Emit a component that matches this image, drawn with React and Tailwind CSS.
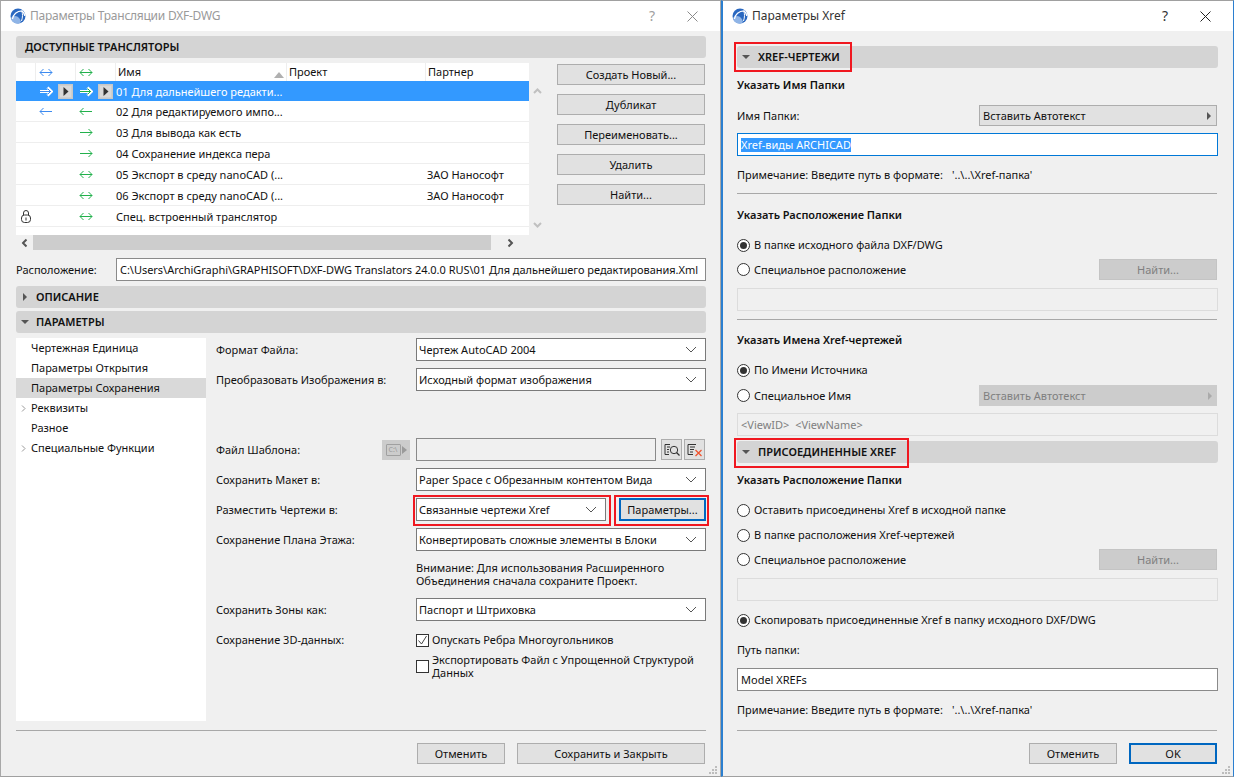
import React from "react";

const Logo = () => (
  <svg width="16" height="16" viewBox="0 0 16 16" className="shrink-0">
    <circle cx="8" cy="8" r="7.500" fill="#2a68c0" />
    <path d="M1 10c0 3 3 5.500 6 5.500 1.500 0 3-.5 4-1.500-.5-3-3-6-6-6-2 0-3.500 1-4 2z" fill="#8fb4e6" />
    <path d="M2.500 11C3 6.500 7 2.800 12 2.800c1.600 1.400 2.600 3 2.800 5.200" fill="none" stroke="#fff" strokeWidth="1.200" />
    <path d="M11.800 3c1 3 1 6-.3 10" fill="none" stroke="#fff" strokeWidth="1" />
  </svg>
);

const Arrow = ({ dir, color }) => (
  <svg width="14" height="9" viewBox="0 0 14 9" className="shrink-0">
    <path
      d={dir === "both" ? "M1 4.500h12M4.500 1 1 4.500 4.500 8M9.500 1 13 4.500 9.500 8" : dir === "left" ? "M1 4.500h12M4.500 1 1 4.500 4.500 8" : "M1 4.500h12M9.500 1 13 4.500 9.500 8"}
      fill="none"
      stroke={color}
      strokeWidth="1"
    />
  </svg>
);

const HollowArrow = ({ color }) => (
  <svg width="14" height="11" viewBox="0 0 14 11" className="shrink-0">
    <path d="M1 5.500h11.500M8.500 1.500l4 4-4 4" fill="none" stroke="#fff" strokeWidth="2.800" />
    <path d="M1 5.500h11M8.500 2.500l3 3-3 3" fill="none" stroke={color} strokeWidth="1" />
  </svg>
);

const Play = () => (
  <span className="flex h-[15px] w-[15px] shrink-0 items-center justify-center border border-[#c8c8c8] bg-[#d9d9d9] outline outline-1 -outline-offset-2 outline-[#cfcfcf]">
    <svg width="6" height="9" viewBox="0 0 6 9"><path d="M.5 0l5 4.500-5 4.500z" fill="#333" /></svg>
  </span>
);

const Caret = ({ open, light }) => (
  <svg width="8" height="8" viewBox="0 0 8 8" className="shrink-0">
    {open ? <path d="M0 2h8L4 6z" fill="#555" /> : <path d="M2 0l4 4-4 4z" fill={light ? "#aaa" : "#555"} />}
  </svg>
);

const Chevron = ({ className }) => (
  <svg width="12" height="7" viewBox="0 0 12 7" className={className}>
    <path d="M1 1l5 5 5-5" fill="none" stroke="#555" strokeWidth="1" />
  </svg>
);

const ThickChevron = ({ color, className }) => (
  <svg width="9" height="6" viewBox="0 0 9 6" className={className}>
    <path d="M1 1l3.500 3.500L8 1" fill="none" stroke={color} strokeWidth="2" />
  </svg>
);

const Close = ({ color }) => (
  <svg width="11" height="11" viewBox="0 0 11 11"><path d="M.5.500l10 10M10.500.500l-10 10" stroke={color} strokeWidth="1" /></svg>
);

const Header = ({ open = true, flush, wide, children, className = "" }) => (
  <div className={`flex h-[22px] items-center rounded-[3px] bg-[#d4d4d4] ${className}`}>
    {flush ? null : <span className={`ml-[6px] flex w-[6px] justify-center ${wide ? "mr-[9px]" : "mr-[8px]"}`}><Caret open={open} /></span>}
    <span className="whitespace-nowrap font-semibold text-[#111]">{children}</span>
  </div>
);

const Btn = ({ children, className = "", disabled, primary }) => (
  <div className={`flex h-[21px] items-center justify-center whitespace-nowrap border ${primary ? "border-2 border-[#0067c0]" : disabled ? "border-[#c4c4c4]" : "border-[#adadad]"} ${disabled ? "bg-[#cccccc] text-[#7f7f7f]" : "bg-[#e1e1e1] text-[#111]"} ${className}`}>
    {children}
  </div>
);

const Select = ({ children, className = "" }) => (
  <div className={`flex h-[23px] items-center justify-between border border-[#7a7a7a] bg-white pl-[2px] pr-[8px] text-[#111] ${className}`}>
    <span className="whitespace-nowrap">{children}</span>
    <Chevron />
  </div>
);

const Input = ({ children, className = "" }) => (
  <div className={`flex h-[23px] items-center whitespace-nowrap border border-[#8a8a8a] bg-white px-[3px] text-[#111] ${className}`}>{children}</div>
);

const Radio = ({ checked, children, className = "" }) => (
  <div className={`flex items-center gap-[4px] ${className}`}>
    <span className="flex h-[13px] w-[13px] shrink-0 items-center justify-center rounded-full border border-[#333] bg-white">
      {checked && <span className="h-[7px] w-[7px] rounded-full bg-[#333]" />}
    </span>
    <span className="whitespace-nowrap text-[#111]">{children}</span>
  </div>
);

const Check = ({ checked, children, className = "" }) => (
  <div className={`flex items-center gap-[3px] ${className}`}>
    <span className="flex h-[13px] w-[13px] shrink-0 items-center justify-center border border-[#333] bg-white">
      {checked && <svg width="11" height="11" viewBox="0 0 11 11"><path d="M1.500 5.500l3 3.500 5-8" fill="none" stroke="#444" strokeWidth="1" /></svg>}
    </span>
    <span className="text-[#111]">{children}</span>
  </div>
);

const Bold = ({ children, className = "" }) => <div className={`h-[16px] whitespace-nowrap font-semibold leading-[16px] text-[#111] ${className}`}>{children}</div>;

const Grip = () => (
  <svg width="10" height="10" viewBox="0 0 10 10" className="absolute bottom-[1px] right-[2px]">
    <g fill="#bdbdbd"><rect x="7" y="1" width="2" height="2" /><rect x="4" y="4" width="2" height="2" /><rect x="7" y="4" width="2" height="2" /><rect x="1" y="7" width="2" height="2" /><rect x="4" y="7" width="2" height="2" /><rect x="7" y="7" width="2" height="2" /></g>
  </svg>
);

const rows = [
  { n: "01 Для дальнейшего редакти...", sel: true },
  { n: "02 Для редактируемого импо...", a: "left", b: "left" },
  { n: "03 Для вывода как есть", b: "right" },
  { n: "04 Сохранение индекса пера", b: "right" },
  { n: "05 Экспорт в среду nanoCAD (...", b: "both", p: "ЗАО Нанософт" },
  { n: "06 Экспорт в среду nanoCAD (...", b: "both", p: "ЗАО Нанософт" },
  { n: "Спец. встроенный транслятор", b: "both", lock: true },
];

const BLUE = "#3d8bf0";
const GREEN = "#22b14c";

const Row = ({ r }) => (
  <div className={`flex items-center ${r.sel ? "h-[20px] bg-[#3399ff] text-white" : "h-[21px] border-b border-[#eeeeee] text-[#111]"}`}>
    <span className="flex w-[20px] justify-center pt-[1px]">
      {r.lock && (
        <svg width="10" height="13" viewBox="0 0 10 13"><rect x=".5" y="5" width="9" height="7.500" rx="3" fill="#fff" stroke="#333" /><path d="M2.500 5V3a2.500 2.500 0 0 1 5 0v2" fill="none" stroke="#333" /><rect x="4.500" y="7.500" width="1" height="3" fill="#333" /></svg>
      )}
    </span>
    <span className="flex w-[40px] items-center pl-[3px]">
      {r.sel ? <><HollowArrow color={BLUE} /><span className="ml-[5px]"><Play /></span></> : r.a && <Arrow dir={r.a} color={BLUE} />}
    </span>
    <span className="flex w-[40px] items-center pl-[3px]">
      {r.sel ? <><HollowArrow color={GREEN} /><span className="ml-[5px]"><Play /></span></> : r.b && <Arrow dir={r.b} color={GREEN} />}
    </span>
    <span className="w-[311px] whitespace-nowrap pt-[1px]">{r.n}</span>
    <span className="whitespace-nowrap pt-[1px]">{r.p}</span>
  </div>
);

const FormRow = ({ label, children, className = "" }) => (
  <div className={`flex items-center ${className}`}>
    <span className="w-[200px] whitespace-nowrap text-[#111]">{label}</span>
    <div className="flex-1">{children}</div>
  </div>
);

function LeftWindow() {
  return (
    <div className="relative flex h-[777px] w-[721px] shrink-0 flex-col border-x border-t border-b border-x-[#a8a8a8] border-t-[#a0a0a0] border-b-[#a0a0a0] bg-[#f0f0f0]">
      <div className="flex h-[30px] shrink-0 items-center bg-white pl-[9px] pr-[22px]">
        <Logo />
        <span className="ml-[4px] whitespace-nowrap text-[12px] tracking-[-0.25px] text-[#9a9a9a]">Параметры Трансляции DXF-DWG</span>
        <span className="ml-auto mr-[32px] text-[14px] text-[#a0a0a0]">?</span>
        <Close color="#8a8a8a" />
      </div>
      <div className="flex flex-1 flex-col pl-[15px] pr-[14px] pt-[5px]">
        <Header flush className="pl-[9px]">ДОСТУПНЫЕ ТРАНСЛЯТОРЫ</Header>
        <div className="mt-[5px] flex">
          <div className="w-[513px] shrink-0">
            <div className="h-[172px] bg-white">
              <div className="flex h-[18px] items-center text-[#111]">
                <span className="h-full w-[20px] border-r border-[#eeeeee]" />
                <span className="flex h-full w-[40px] items-center border-r border-[#eeeeee] pl-[3px]"><Arrow dir="both" color={BLUE} /></span>
                <span className="flex h-full w-[40px] items-center border-r border-[#eeeeee] pl-[3px]"><Arrow dir="both" color={GREEN} /></span>
                <span className="relative flex h-full w-[171px] items-center border-r border-[#eeeeee] pl-[2px]">
                  Имя
                  <svg width="10" height="6" viewBox="0 0 10 6" className="absolute right-[2px] top-[9px]"><path d="M0 6l5-6 5 6z" fill="#b0b0b0" /></svg>
                </span>
                <span className="flex h-full w-[139px] items-center border-r border-[#eeeeee] pl-[2px]">Проект</span>
                <span className="pl-[2px]">Партнер</span>
              </div>
              {rows.map((r) => <Row key={r.n} r={r} />)}
            </div>
            <div className="flex h-[15px] items-center justify-between bg-[#f0f0f0]">
              <span className="flex w-[17px] justify-center"><ThickChevron color="#555" className="rotate-90" /></span>
              <span className="h-full w-[458px] bg-[#cdcdcd]" />
              <span className="flex w-[38px] justify-center"><ThickChevron color="#555" className="-rotate-90" /></span>
            </div>
          </div>
          <div className="flex h-[172px] w-[28px] shrink-0 flex-col items-center justify-between pb-[7px] pr-[12px] pt-[25px]">
            <ThickChevron color="#c0c0c0" className="rotate-180" />
            <ThickChevron color="#c0c0c0" />
          </div>
          <div className="flex w-[148px] flex-col gap-[9px] pt-[1px]">
            <Btn>Создать Новый...</Btn>
            <Btn>Дубликат</Btn>
            <Btn>Переименовать...</Btn>
            <Btn>Удалить</Btn>
            <Btn>Найти...</Btn>
          </div>
        </div>
        <div className="mt-[8px] flex items-center">
          <span className="w-[100px] whitespace-nowrap text-[#111]">Расположение:</span>
          <Input className="flex-1 overflow-hidden tracking-[-0.03px]">C:\Users\ArchiGraphi\GRAPHISOFT\DXF-DWG Translators 24.0.0 RUS\01 Для дальнейшего редактирования.Xml</Input>
        </div>
        <Header open={false} className="mt-[5px]">ОПИСАНИЕ</Header>
        <Header className="mt-[3px]">ПАРАМЕТРЫ</Header>
        <div className="mt-[5px] flex h-[383px]">
          <div className="w-[190px] shrink-0 bg-white text-[#111]">
            {[["Чертежная Единица"], ["Параметры Открытия"], ["Параметры Сохранения", 0, 1], ["Реквизиты", 1], ["Разное"], ["Специальные Функции", 1]].map(([t, c, s]) => (
              <div key={t} className={`flex h-[20px] items-center whitespace-nowrap ${s ? "bg-[#d9d9d9]" : ""}`}>
                <span className="flex w-[15px] justify-center">{c ? <svg width="5" height="7" viewBox="0 0 5 7"><path d="M1 .5l3 3-3 3" fill="none" stroke="#999" /></svg> : null}</span>
                {t}
              </div>
            ))}
          </div>
          <div className="ml-[10px] flex flex-1 flex-col">
            <FormRow label="Формат Файла:"><Select>Чертеж AutoCAD 2004</Select></FormRow>
            <FormRow label="Преобразовать Изображения в:" className="mt-[7px]"><Select>Исходный формат изображения</Select></FormRow>
            <div className="mt-[47px] flex items-center">
              <span className="w-[166px] whitespace-nowrap text-[#111]">Файл Шаблона:</span>
              <span className="flex h-[20px] w-[28px] items-center justify-center gap-[1px] bg-[#cccccc]">
                <span className="flex h-[12px] w-[15px] items-center justify-center rounded-[1px] border border-[#a0a0a0] text-[7px] leading-[7px] text-[#9a9a9a]">C:\</span>
                <svg width="5" height="8" viewBox="0 0 5 8"><path d="M0 0l5 4-5 4z" fill="#9a9a9a" /></svg>
              </span>
              <span className="ml-[6px] h-[23px] w-[240px] border border-[#8a8a8a] bg-[#f0f0f0]" />
              <span className="ml-[5px] flex h-[21px] w-[21px] items-center justify-center border border-[#adadad] bg-[#e1e1e1]">
                <svg width="16" height="14" viewBox="0 0 16 14"><path d="M6 1.500H1v10h4M3 4h3M3 6.500h2M3 9h2" fill="none" stroke="#333" /><circle cx="10" cy="7" r="3.700" fill="none" stroke="#333" /><path d="M12.500 9.500l3 3" stroke="#333" strokeWidth="1.300" /></svg>
              </span>
              <span className="ml-[2px] flex h-[21px] w-[21px] items-center justify-center border border-[#adadad] bg-[#e1e1e1]">
                <svg width="16" height="14" viewBox="0 0 16 14"><path d="M9 1.500H1v10h5M3 4h5M3 6.500h4M3 9h3" fill="none" stroke="#333" /><path d="M8.500 7l6 6M14.500 7l-6 6" stroke="#f0502a" strokeWidth="1.200" /></svg>
              </span>
            </div>
            <FormRow label="Сохранить Макет в:" className="mt-[7px]"><Select>Paper Space с Обрезанным контентом Вида</Select></FormRow>
            <div className="mt-[7px] flex items-center">
              <span className="w-[200px] whitespace-nowrap text-[#111]">Разместить Чертежи в:</span>
              <Select className="w-[190px]">Связанные чертежи Xref</Select>
              <Btn primary className="ml-[13px] h-[23px] w-[87px]">Параметры...</Btn>
            </div>
            <FormRow label="Сохранение Плана Этажа:" className="mt-[7px]"><Select>Конвертировать сложные элементы в Блоки</Select></FormRow>
            <div className="ml-[200px] mt-[10px] leading-[13px] text-[#111]">
              Внимание: Для использования Расширенного<br />Объединения сначала сохраните Проект.
            </div>
            <FormRow label="Сохранить Зоны как:" className="mt-[11px]"><Select>Паспорт и Штриховка</Select></FormRow>
            <div className="mt-[12px] flex items-center">
              <span className="w-[200px] whitespace-nowrap text-[#111]">Сохранение 3D-данных:</span>
              <Check checked>Опускать Ребра Многоугольников</Check>
            </div>
            <Check className="ml-[200px] mt-[6px] leading-[13px]">Экспортировать Файл с Упрощенной Структурой<br />Данных</Check>
          </div>
        </div>
        <div className="mt-[9px] h-px bg-[#a8a8a8]" />
        <div className="mr-[1px] mt-[12px] flex justify-end gap-[12px]">
          <Btn className="w-[88px]">Отменить</Btn>
          <Btn className="w-[188px]">Сохранить и Закрыть</Btn>
        </div>
      </div>
      <Grip />
      <div className="pointer-events-none absolute left-[412px] top-[494px] h-[31px] w-[198px] border-[2px] border-[#f01820]" />
      <div className="pointer-events-none absolute left-[613px] top-[494px] h-[31px] w-[95px] border-[2px] border-[#f01820]" />
    </div>
  );
}

const Divider = ({ className = "" }) => <div className={`h-px bg-[#a8a8a8] ${className}`} />;

const Note = ({ className = "" }) => (
  <div className={`flex h-[16px] whitespace-nowrap leading-[16px] text-[#111] ${className}`}>
    <span className="w-[215px]">Примечание: Введите путь в формате:</span>
    <span>'..\..\Xref-папка'</span>
  </div>
);

function RightWindow() {
  return (
    <div className="relative flex h-[777px] flex-1 flex-col border-y border-l-2 border-r border-y-[#a0a0a0] border-l-[#2b7fd0] border-r-[#2b7fd0] bg-[#f0f0f0]">
      <div className="flex h-[30px] shrink-0 items-center bg-white pl-[9px] pr-[22px]">
        <Logo />
        <span className="ml-[4px] whitespace-nowrap text-[12px] text-[#333]">Параметры Xref</span>
        <span className="ml-auto mr-[32px] text-[14px] text-[#333]">?</span>
        <Close color="#222" />
      </div>
      <div className="flex flex-1 flex-col pl-[14px] pr-[15px] pt-[15px]">
        <Header wide>XREF-ЧЕРТЕЖИ</Header>
        <Bold className="mt-[9px]">Указать Имя Папки</Bold>
        <div className="mt-[12px] flex items-center justify-between">
          <span className="text-[#111]">Имя Папки:</span>
          <div className="mr-[1px] flex h-[21px] w-[238px] items-center justify-between border border-[#adadad] bg-[#e1e1e1] pl-[3px] pr-[3px] text-[#111]"><span>Вставить Автотекст</span><Caret /></div>
        </div>
        <Input className="mt-[7px] border-[#0078d7]"><span className="bg-[#3399ff] text-white">Xref-виды ARCHICAD</span></Input>
        <Note className="mt-[11px]" />
        <Divider className="mt-[10px] mr-[1px]" />
        <Bold className="mt-[13px]">Указать Расположение Папки</Bold>
        <Radio checked className="mt-[14px] h-[16px]">В папке исходного файла DXF/DWG</Radio>
        <div className="mt-[6px] flex h-[21px] items-center justify-between">
          <Radio>Специальное расположение</Radio>
          <Btn disabled className="mr-[1px] w-[118px]">Найти...</Btn>
        </div>
        <div className="mt-[8px] h-[23px] border border-[#dcdcdc] bg-[#f0f0f0]" />
        <Divider className="mt-[8px] mr-[1px]" />
        <Bold className="mt-[12px]">Указать Имена Xref-чертежей</Bold>
        <Radio checked className="mt-[14px] h-[16px]">По Имени Источника</Radio>
        <div className="mt-[7px] flex h-[21px] items-center justify-between">
          <Radio>Специальное Имя</Radio>
          <div className="mr-[1px] flex h-[21px] w-[238px] items-center justify-between bg-[#cccccc] pl-[4px] pr-[3px] text-[#7f7f7f]"><span>Вставить Автотекст</span><Caret light /></div>
        </div>
        <div className="mt-[7px] flex h-[23px] items-center border border-[#dcdcdc] px-[3px] text-[#7f7f7f]">&lt;ViewID&gt; &nbsp;&lt;ViewName&gt;</div>
        <Header wide className="mt-[5px]">ПРИСОЕДИНЕННЫЕ XREF</Header>
        <Bold className="mt-[9px]">Указать Расположение Папки</Bold>
        <Radio className="mt-[14px] h-[16px]">Оставить присоединены Xref в исходной папке</Radio>
        <Radio className="mt-[9px] h-[16px]">В папке расположения Xref-чертежей</Radio>
        <div className="mt-[6px] flex h-[21px] items-center justify-between">
          <Radio>Специальное расположение</Radio>
          <Btn disabled className="mr-[1px] w-[118px]">Найти...</Btn>
        </div>
        <div className="mt-[8px] h-[23px] border border-[#dcdcdc] bg-[#f0f0f0]" />
        <Radio checked className="mt-[11px] h-[16px]">Скопировать присоединенные Xref в папку исходного DXF/DWG</Radio>
        <div className="mt-[14px] h-[16px] leading-[16px] text-[#111]">Путь папки:</div>
        <Input className="mt-[10px]">Model XREFs</Input>
        <Note className="mt-[11px]" />
        <Divider className="mt-[12px] mr-[1px]" />
        <div className="mr-[1px] mt-[12px] flex justify-end gap-[12px]">
          <Btn className="w-[88px]">Отменить</Btn>
          <Btn primary className="w-[88px]">OK</Btn>
        </div>
      </div>
      <Grip />
      <div className="pointer-events-none absolute left-[11px] top-[41px] h-[30px] w-[118px] border-[2px] border-[#f01820]" />
      <div className="pointer-events-none absolute left-[11px] top-[437px] h-[30px] w-[175px] border-[2px] border-[#f01820]" />
    </div>
  );
}

export default function App() {
  return (
    <div className="flex h-[777px] w-[1234px] overflow-hidden bg-[#f0f0f0] font-['Noto_Sans','Open_Sans',sans-serif] text-[11px] leading-[14px]">
      <LeftWindow />
      <RightWindow />
    </div>
  );
}
